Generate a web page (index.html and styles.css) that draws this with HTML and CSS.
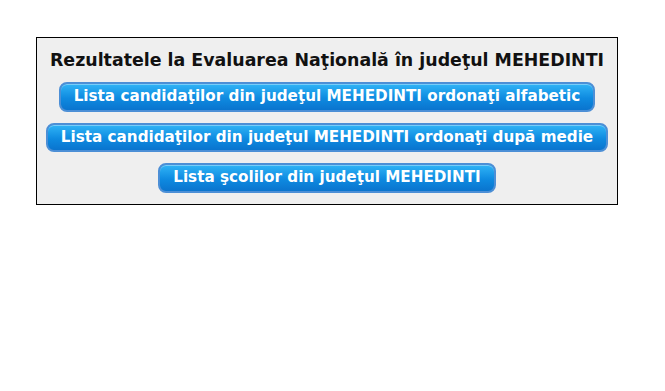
FILE: index.html
```html
<!DOCTYPE html>
<html>
<head>
    <title>Evaluarea Nationala MEHEDINTI</title>
    <link rel="stylesheet" href="styles.css">
</head>
<body>

<div class="box">
    <div class="title">Rezultatele la Evaluarea Naţională în judeţul MEHEDINTI</div>
    <div class="row"><a class="btn" href="#">Lista candidaţilor din judeţul MEHEDINTI ordonaţi alfabetic</a></div>
    <div class="row"><a class="btn" href="#">Lista candidaţilor din judeţul MEHEDINTI ordonaţi după medie</a></div>
    <div class="row"><a class="btn" href="#">Lista şcolilor din judeţul MEHEDINTI</a></div>
</div>

</body>
</html>
```

FILE: styles.css
```css
body { margin: 8px; background: #fff; font-family: "DejaVu Sans", Verdana, sans-serif; }
.box {
    width: 580px; margin: 29px 0 0 28px; padding: 12px 0 11px;
    background: #efefef; border: 1px solid #000;
    display: flex; flex-direction: column; align-items: center; gap: 11px;
}
.title { font-size: 17.4px; line-height: 20px; font-weight: bold; color: #111; margin-bottom: 1px; }
.row { display: flex; justify-content: center; }
.btn {
    display: block; padding: 3px 13px 4px;
    font-size: 15.2px; line-height: 18.5px; font-weight: bold; color: #fff; text-decoration: none;
    background: linear-gradient(#30b4f6, #0e8ae0 55%, #0a74ce);
    border: 2px solid #4c8fd6; border-radius: 8px;
    box-shadow: inset 0 1px 0 rgba(255,255,255,0.35);
}
```
